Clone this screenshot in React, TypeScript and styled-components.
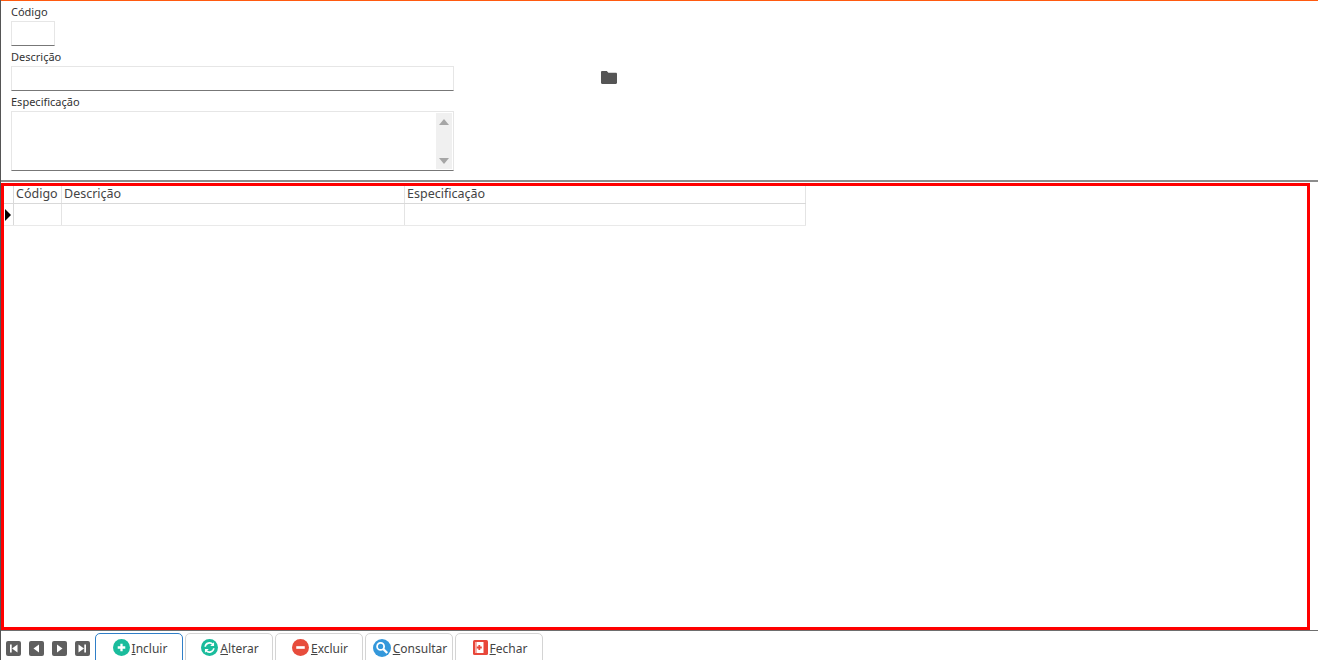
import styled, { createGlobalStyle } from "styled-components";

const GlobalStyle = createGlobalStyle`
  html, body {
    margin: 0;
    padding: 0;
    height: 100%;
    overflow: hidden;
    background: #fff;
  }
  * { box-sizing: border-box; }
`;

function IconCircle({ color, size = 17, children }: { color: string; size?: number; children: React.ReactNode }) {
  return (
    <svg width={size} height={size} viewBox="0 0 18 18">
      <circle cx="9" cy="9" r="9" fill={color} />
      {children}
    </svg>
  );
}

const navPaths = [
  "M4 3.500h1.700v8H4zM11.500 3.500v8L6 7.500z",
  "M10 3.500v8L4.500 7.500z",
  "M5 3.500v8l5.500-4z",
  "M3.500 3.500v8L9 7.500zM9.300 3.500H11v8H9.300z",
];

const buttons = [
  {
    label: "Incluir",
    key: "I",
    rest: "ncluir",
    active: true,
    icon: (
      <IconCircle color="#1abc9c">
        <path d="M9 5v8M5 9h8" stroke="#fff" strokeWidth="2.400" />
      </IconCircle>
    ),
  },
  {
    label: "Alterar",
    key: "A",
    rest: "lterar",
    icon: (
      <IconCircle color="#1abc9c">
        <path d="M4.400 8.200a4.700 4.700 0 0 1 8.200-2.400" fill="none" stroke="#fff" strokeWidth="1.700" />
        <path d="M13.800 3.400v4h-4z" fill="#fff" />
        <path d="M13.600 9.800a4.700 4.700 0 0 1-8.200 2.400" fill="none" stroke="#fff" strokeWidth="1.700" />
        <path d="M4.200 14.600v-4h4z" fill="#fff" />
      </IconCircle>
    ),
  },
  {
    label: "Excluir",
    key: "E",
    rest: "xcluir",
    icon: (
      <IconCircle color="#e74c3c">
        <path d="M4.500 9h9" stroke="#fff" strokeWidth="2.800" />
      </IconCircle>
    ),
  },
  {
    label: "Consultar",
    key: "C",
    rest: "onsultar",
    icon: (
      <IconCircle color="#3498db" size={18}>
        <circle cx="7.600" cy="7.400" r="3.500" fill="none" stroke="#fff" strokeWidth="1.800" />
        <path d="M10.200 10l4 4" stroke="#fff" strokeWidth="2.400" />
      </IconCircle>
    ),
  },
  {
    label: "Fechar",
    key: "F",
    rest: "echar",
    icon: (
      <svg width="15" height="15" viewBox="0 0 15 15">
        <rect width="15" height="15" rx="1.500" fill="#e8473a" />
        <path d="M2.500 2h8v11h-8z" fill="#fff" />
        <path d="M2.500 2h1.500v11H2.500z" fill="#f7b5ae" />
        <path d="M3.800 7.500h5M6.300 5v5" stroke="#e8473a" strokeWidth="1.800" />
      </svg>
    ),
  },
];

function App() {
  return (
    <Page>
      <GlobalStyle />
      <FormArea>
        <Field>
          <FieldLabel>Código</FieldLabel>
          <TextBox $width={44} />
        </Field>
        <Field>
          <FieldLabel>Descrição</FieldLabel>
          <TextBox $width={443} />
        </Field>
        <Field>
          <FieldLabel>Especificação</FieldLabel>
          <MemoBox>
            <ScrollTrack>
              <ArrowUp />
              <ArrowDown />
            </ScrollTrack>
          </MemoBox>
        </Field>
        <FolderIcon viewBox="0 0 16 13">
          <path d="M1.200 0h4.600l1.600 1.800h7.400c.7 0 1.200.5 1.200 1.200v8.800c0 .7-.5 1.200-1.200 1.200H1.200C.5 13 0 12.500 0 11.800V1.200C0 .5.5 0 1.200 0z" fill="#555" />
        </FolderIcon>
      </FormArea>
      <GridFrame>
        <GridTable>
          <GridRow>
            <IndicatorCell />
            <CodeCell>Código</CodeCell>
            <DescCell>Descrição</DescCell>
            <SpecCell>Especificação</SpecCell>
          </GridRow>
          <DataRow>
            <IndicatorCell>
              <RowMarker />
            </IndicatorCell>
            <CodeCell />
            <DescCell />
            <SpecCell />
          </DataRow>
        </GridTable>
      </GridFrame>
      <Footer>
        <NavGroup>
          {navPaths.map((d) => (
            <NavButton key={d}>
              <svg width="15" height="15" viewBox="0 0 15 15">
                <rect width="15" height="15" rx="2" fill="#5f5f5f" />
                <path d={d} fill="#fff" />
              </svg>
            </NavButton>
          ))}
        </NavGroup>
        <ActionGroup>
          {buttons.map((b) => (
            <ActionButton key={b.label} $active={b.active}>
              {b.icon}
              <ActionText>
                <u>{b.key}</u>
                {b.rest}
              </ActionText>
            </ActionButton>
          ))}
        </ActionGroup>
      </Footer>
    </Page>
  );
}

export default App;

const Page = styled.div`
  display: flex;
  flex-direction: column;
  width: 1318px;
  height: 660px;
  overflow: hidden;
  background: #fff;
  border-left: 1px solid #555;
  font-family: "Noto Sans", "Open Sans", sans-serif;
  color: #333;
`;

const FormArea = styled.div`
  position: relative;
  display: flex;
  flex: none;
  flex-direction: column;
  height: 182px;
  margin-bottom: 1px;
  padding: 3px 0 0 10px;
  border-top: 1px solid #ff5a10;
  border-bottom: 2px solid #8c8c8c;
`;

const Field = styled.div`
  display: flex;
  flex-direction: column;
`;

const FieldLabel = styled.label`
  height: 17px;
  font-size: 11px;
  line-height: 15px;
  color: #333;
`;

const TextBox = styled.div<{ $width: number }>`
  width: ${(p) => p.$width}px;
  height: 25px;
  margin-bottom: 3px;
  background: #fff;
  border: 1px solid #e6e6e6;
  border-bottom: 1px solid #777;
`;

const MemoBox = styled.div`
  display: flex;
  justify-content: flex-end;
  width: 443px;
  height: 60px;
  padding: 1px;
  background: #fff;
  border: 1px solid #e6e6e6;
  border-bottom: 1px solid #777;
`;

const ScrollTrack = styled.div`
  display: flex;
  flex-direction: column;
  align-items: center;
  justify-content: space-between;
  width: 16px;
  padding: 6px 0 5px;
  background: #f0f0f0;
`;

const ArrowUp = styled.span`
  width: 0;
  height: 0;
  border-left: 5px solid transparent;
  border-right: 5px solid transparent;
  border-bottom: 6px solid #a6a6a6;
`;

const ArrowDown = styled(ArrowUp)`
  border-bottom: 0;
  border-top: 6px solid #a6a6a6;
`;

const FolderIcon = styled.svg`
  position: absolute;
  left: 600px;
  top: 70px;
  width: 16px;
  height: 13px;
`;

const GridFrame = styled.div`
  flex: none;
  width: 1309px;
  height: 447px;
  border: 3px solid #ff0000;
  overflow: hidden;
`;

const GridTable = styled.div`
  display: flex;
  flex-direction: column;
  width: 802px;
`;

const GridRow = styled.div`
  display: flex;
  height: 18px;
  border-bottom: 1px solid #d9d9d9;
`;

const DataRow = styled(GridRow)`
  height: 22px;
  border-bottom: 1px solid #e9e9e9;
`;

const Cell = styled.div`
  display: flex;
  align-items: flex-start;
  flex: none;
  border-right: 1px solid #e4e4e4;
  font-size: 12.500px;
  line-height: 15px;
  white-space: nowrap;
  color: #444;
`;

const IndicatorCell = styled(Cell)`
  width: 10px;
  border-right-color: #d9d9d9;
`;

const CodeCell = styled(Cell)`
  width: 48px;
  padding-left: 2px;
`;

const DescCell = styled(Cell)`
  width: 343px;
  padding-left: 2px;
`;

const SpecCell = styled(Cell)`
  width: 401px;
  padding-left: 2px;
`;

const RowMarker = styled.span`
  align-self: center;
  width: 0;
  height: 0;
  margin-left: 1px;
  border-top: 6px solid transparent;
  border-bottom: 6px solid transparent;
  border-left: 6px solid #000;
`;

const Footer = styled.div`
  display: flex;
  flex: none;
  height: 31px;
  padding: 2px 0 0 5px;
  border-top: 1px solid #6e6e6e;
`;

const NavGroup = styled.div`
  display: flex;
  gap: 8px;
  padding-top: 6px;
  margin-right: 5px;
`;

const NavButton = styled.span`
  display: block;
  width: 15px;
  height: 15px;
`;

const ActionGroup = styled.div`
  display: flex;
  gap: 2px;
`;

const ActionButton = styled.div<{ $active?: boolean }>`
  display: flex;
  align-items: center;
  justify-content: center;
  gap: 2px;
  width: 88px;
  height: 32px;
  padding: 0 0 3px 2px;
  background: #fff;
  border: 1px solid ${(p) => (p.$active ? "#2f7fc8" : "#d4d4d4")};
  border-radius: 5px 5px 0 0;
`;

const ActionText = styled.span`
  font-size: 12px;
  line-height: 16px;
  color: #444;
  padding-top: 3px;
`;
